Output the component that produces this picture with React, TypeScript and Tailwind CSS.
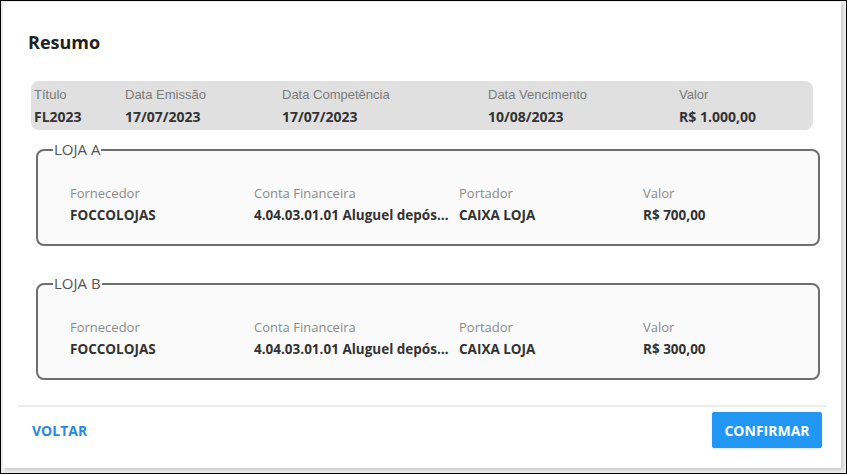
import React from 'react';

interface Loja {
  nome: string;
  fornecedor: string;
  conta: string;
  portador: string;
  valor: string;
}

const lojas: Loja[] = [
  { nome: 'LOJA A', fornecedor: 'FOCCOLOJAS', conta: '4.04.03.01.01 Aluguel depósito', portador: 'CAIXA LOJA', valor: 'R$ 700,00' },
  { nome: 'LOJA B', fornecedor: 'FOCCOLOJAS', conta: '4.04.03.01.01 Aluguel depósito', portador: 'CAIXA LOJA', valor: 'R$ 300,00' },
];

const resumo = [
  { label: 'Título', value: 'FL2023' },
  { label: 'Data Emissão', value: '17/07/2023' },
  { label: 'Data Competência', value: '17/07/2023' },
  { label: 'Data Vencimento', value: '10/08/2023' },
  { label: 'Valor', value: 'R$ 1.000,00' },
];

const LojaCard: React.FC<{ loja: Loja }> = ({ loja }) => (
  <fieldset className="min-w-0 rounded-lg border-2 border-[#6e6e6e] bg-[#fafafa] pb-[19px] pl-[15px] pr-4 pt-[27px]">
    <legend className="px-[1px] text-[15px] leading-none text-[#555]">{loja.nome}</legend>
    <div className="ml-[17px] grid grid-cols-[184px_205px_184px_1fr]">
      <span className="text-[13px] leading-[18px] text-[#8a8a8a]">Fornecedor</span>
      <span className="text-[13px] leading-[18px] text-[#8a8a8a]">Conta Financeira</span>
      <span className="text-[13px] leading-[18px] text-[#8a8a8a]">Portador</span>
      <span className="text-[13px] leading-[18px] text-[#8a8a8a]">Valor</span>
      <span className="mt-[4px] text-[13.5px] font-bold leading-[19px] text-[#333]">{loja.fornecedor}</span>
      <span className="mt-[4px] truncate pr-[9px] text-[13.5px] font-bold leading-[19px] text-[#333]">{loja.conta}</span>
      <span className="mt-[4px] text-[13.5px] font-bold leading-[19px] text-[#333]">{loja.portador}</span>
      <span className="mt-[4px] text-[13.5px] font-bold leading-[19px] text-[#333]">{loja.valor}</span>
    </div>
  </fieldset>
);

export default function App() {
  return (
    <div className="h-[474px] w-[847px] overflow-hidden border border-black bg-[#ececec] pl-[2px] pt-[1px] font-['Open_Sans',sans-serif]">
      <div className="flex h-[466px] w-[838px] flex-col bg-white shadow-[2px_2px_3px_rgba(0,0,0,0.15)]">
        <h1 className="pl-[25px] pt-[28px] text-[18px] font-bold leading-[24px] text-[#222]">Resumo</h1>

        <div className="mx-[28px] mt-[27px] grid h-[49px] grid-cols-[91px_157px_206px_191px_1fr] rounded-lg bg-[#e0e0e0] pl-[3px] pt-[5px]">
          {resumo.map((r) => (
            <div key={r.label} className="flex flex-col">
              <span className="font-['Liberation_Sans',Arial,sans-serif] text-[13px] leading-[18px] text-[#7a7a7a]">{r.label}</span>
              <span className="mt-[3px] text-[14px] font-bold leading-[19px] text-[#333]">{r.value}</span>
            </div>
          ))}
        </div>

        <div className="ml-[33px] mr-[21px] mt-[12px] flex flex-col gap-[30px]">
          {lojas.map((l) => (
            <LojaCard key={l.nome} loja={l} />
          ))}
        </div>

        <div className="mx-[15px] mt-auto border-t-2 border-[#ececec]" />
        <div className="flex items-center justify-between pb-[20px] pl-[29px] pr-[19px] pt-[5px]">
          <button className="text-[14px] font-bold text-[#2b88e0]">VOLTAR</button>
          <button className="h-[36px] w-[110px] rounded-[2px] bg-[#2196f3] text-[14px] font-bold text-white shadow-sm">CONFIRMAR</button>
        </div>
      </div>
    </div>
  );
}
